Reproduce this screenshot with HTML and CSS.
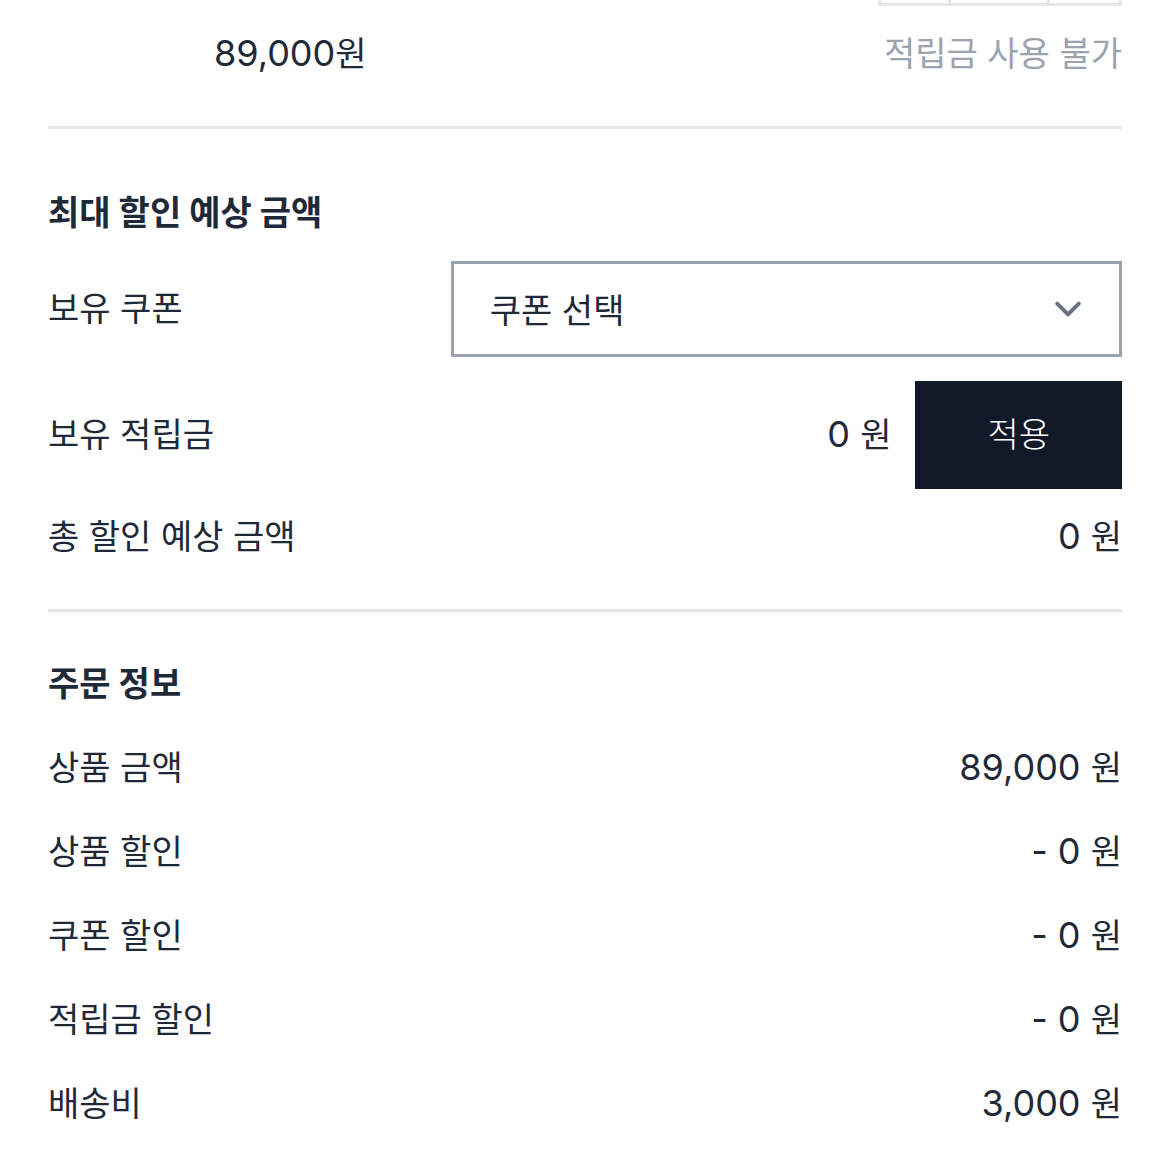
FILE: index.html
```
<!DOCTYPE html>
<html lang="ko">
<head>
  <meta charset="UTF-8" />
  <meta name="viewport" content="width=device-width, initial-scale=1.0"/>
  <title>주문하기</title>
  <link rel="stylesheet" href="styles.css">
</head>
<body>

  <main class="order">
    <section class="item">
      <div class="quantity">
        <span></span>
        <span></span>
        <span></span>
      </div>
      <div class="row">
        <span class="item-price"><span class="num">89,000</span>원</span>
        <span class="muted">적립금 사용 불가</span>
      </div>
    </section>

    <section class="discount">
      <h2>최대 할인 예상 금액</h2>
      <div class="coupon">
        <label for="coupon">보유 쿠폰</label>
        <div class="select-box">
          <select id="coupon">
            <option>쿠폰 선택</option>
          </select>
          <svg class="chevron" viewBox="0 0 20 20" aria-hidden="true">
            <path d="M6 8l4 4 4-4" />
          </svg>
        </div>
      </div>
      <div class="row">
        <span>보유 적립금</span>
        <div class="point">
          <span><span class="num">0 </span>원</span>
          <button type="button">적용</button>
        </div>
      </div>
      <div class="row">
        <span>총 할인 예상 금액</span>
        <span><span class="num">0 </span>원</span>
      </div>
    </section>

    <section class="summary">
      <h2>주문 정보</h2>
      <div class="row">
        <span>상품 금액</span>
        <span><span class="num">89,000 </span>원</span>
      </div>
      <div class="row">
        <span>상품 할인</span>
        <span><span class="num">- 0 </span>원</span>
      </div>
      <div class="row">
        <span>쿠폰 할인</span>
        <span><span class="num">- 0 </span>원</span>
      </div>
      <div class="row">
        <span>적립금 할인</span>
        <span><span class="num">- 0 </span>원</span>
      </div>
      <div class="row">
        <span>배송비</span>
        <span><span class="num">3,000 </span>원</span>
      </div>
    </section>
  </main>

</body>
</html>
```
FILE: styles.css
```
* {
  box-sizing: border-box;
}

body {
  margin: 0;
  background-color: #fff;
  color: #1f2937;
  font-family: Inter, "Noto Sans CJK KR", sans-serif;
  font-size: 34px;
  line-height: 48px;
}

.order {
  padding: 0 48px;
}

section {
  display: flex;
  flex-direction: column;
}

h2 {
  margin: 0;
  font-size: 34px;
  font-weight: 700;
}

.row {
  display: flex;
  justify-content: space-between;
  align-items: center;
}

.num {
  font-size: 36px;
  line-height: 36px;
}

.muted {
  color: #9ca3af;
}

/* ordered item */
.item {
  gap: 24px;
  padding-bottom: 48px;
  border-bottom: 3px solid #e5e7eb;
}

.quantity {
  display: grid;
  grid-template-columns: 67px 99px 72px;
  align-self: flex-end;
  height: 6px;
  border: 3px solid #e5e7eb;
  border-top: none;
}

.quantity span + span {
  border-left: 3px solid #e5e7eb;
}

.item-price {
  padding-left: 166px;
}

/* coupon and points */
.discount {
  gap: 24px;
  padding: 60px 0 48px;
  border-bottom: 3px solid #e5e5e5;
}

.coupon {
  display: grid;
  grid-template-columns: 3fr 5fr;
  align-items: center;
}

.select-box {
  position: relative;
}

select {
  appearance: none;
  display: block;
  width: 100%;
  height: 96px;
  padding: 4px 96px 0 36px;
  border: 3px solid #9ca3af;
  border-radius: 0;
  background-color: #fff;
  color: inherit;
  font: inherit;
}

.chevron {
  position: absolute;
  top: 21px;
  right: 27px;
  width: 54px;
  height: 54px;
  fill: none;
  stroke: #6b7280;
  stroke-width: 1.5;
  stroke-linecap: round;
  stroke-linejoin: round;
  pointer-events: none;
}

.point {
  display: flex;
  align-items: center;
  gap: 24px;
}

button {
  padding: 30px 72px;
  border: none;
  background-color: #111827;
  color: #fff;
  font: inherit;
  font-weight: 300;
  cursor: pointer;
}

/* order summary */
.summary {
  gap: 36px;
  padding: 48px 0 42px;
}
```
